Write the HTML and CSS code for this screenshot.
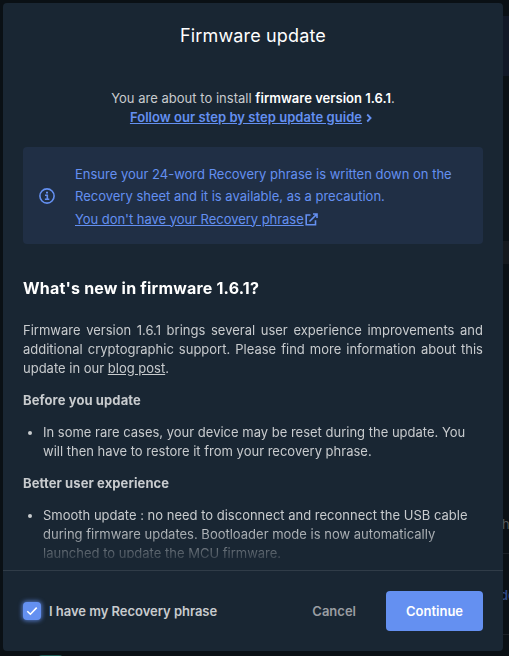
FILE: index.html
```
<!DOCTYPE html>
<html lang="en">
<head>
<meta charset="utf-8">
<title>Firmware update</title>
<link rel="stylesheet" href="styles.css">
</head>
<body>
<div class="backdrop">
  <i class="panel panel-top"></i>
  <i class="panel panel-mid"></i>
  <i class="rule rule-a"></i>
  <i class="rule rule-b"></i>
  <span class="peek peek-text">h</span>
  <span class="peek peek-link">de</span>
  <i class="pill"></i>
</div>
<main class="modal">
  <h1 class="title">Firmware update</h1>
  <section class="body">
    <p class="intro">You are about to install <strong>firmware version 1.6.1</strong>.</p>
    <p class="guide"><a class="guide-link">Follow our step by step update guide</a><svg class="chevron" viewBox="0 0 6 10"><path d="M1.2 1.5 4.6 5 1.2 8.5"/></svg></p>
    <div class="notice">
      <svg class="info" viewBox="0 0 16 16"><circle cx="8" cy="8" r="7.1"/><path d="M6 7.3H8.3V11.4M5.9 11.3H10.3M7 4.6H9" /></svg>
      <div class="notice-text">
        <p>Ensure your 24-word Recovery phrase is written down on the Recovery sheet and it is available, as a precaution.</p>
        <p class="notice-last"><a class="notice-link">You don't have your Recovery phrase</a><svg class="external" viewBox="0 0 13 13"><path d="M5.5 2H1.2V11.8H10.5V7.3M4.5 8.5 11.6 1.4M8 1H12V5"/></svg></p>
      </div>
    </div>
    <div class="notes">
      <h2>What's new in firmware 1.6.1?</h2>
      <p class="summary">Firmware version 1.6.1 brings several user experience improvements and additional cryptographic support. Please find more information about this update in our <a>blog post</a>.</p>
      <h3>Before you update</h3>
      <ul><li>In some rare cases, your device may be reset during the update. You will then have to restore it from your recovery phrase.</li></ul>
      <h3>Better user experience</h3>
      <ul><li>Smooth update : no need to disconnect and reconnect the USB cable during firmware updates. Bootloader mode is now automatically launched to update the MCU firmware.</li></ul>
    </div>
  </section>
  <footer class="footer">
    <span class="checkbox"><svg viewBox="0 0 12 10"><path d="M1.3 5.2 4.4 8.2 10.7 1.6"/></svg></span>
    <span class="check-label">I have my Recovery phrase</span>
    <button class="cancel">Cancel</button>
    <button class="continue">Continue</button>
  </footer>
</main>
</body>
</html>
```
FILE: styles.css
```
* { box-sizing: border-box; }
body {
  margin: 0;
  padding: 3px;
  width: 509px;
  height: 656px;
  overflow: hidden;
  position: relative;
  background: #0a1015;
  color: #c8cbce;
  font: 13px/19px Inter, sans-serif;
}
h1, h2, h3, p, ul { margin: 0; }
svg { display: block; flex: none; fill: none; stroke: currentColor; }

.backdrop { position: absolute; inset: 0; overflow: hidden; }
.backdrop > * { position: absolute; }
.panel { right: 0; width: 6px; background: #111827; }
.panel-top { top: 16px; height: 60px; }
.panel-mid { top: 241px; height: 23px; background: #15191e; }
.rule { right: 0; width: 6px; height: 1px; background: #1b2026; }
.rule-a { top: 553px; }
.rule-b { top: 634px; }
.peek { left: 502px; }
.peek-text { top: 515px; color: #54585c; }
.peek-link { top: 586px; left: 500px; color: #304884; font-weight: 600; }
.pill { left: 38px; top: 655px; width: 25px; height: 8px; border-radius: 4px; background: #1b5752; }

.modal {
  position: relative;
  width: 500px;
  height: 648px;
  display: flex;
  flex-direction: column;
  background: #192633;
  border-radius: 4px;
  overflow: hidden;
}
.title {
  padding-top: 21px;
  text-align: center;
  color: #fff;
  font-size: 18px;
  line-height: 24px;
  font-weight: 400;
  letter-spacing: .14px;
}
.body { flex: 1; min-height: 0; padding: 41px 20px 0; display: flex; flex-direction: column; }
.intro { text-align: center; letter-spacing: .02px; }
.intro strong { color: #fff; font-weight: 600; }
.guide { display: flex; justify-content: center; align-items: center; color: #6490f1; font-weight: 600; padding-right: 4px; }
.guide-link { letter-spacing: .04px; }
.guide-link, .notice-link, .summary a { text-decoration: underline; }
.chevron { width: 6px; height: 10px; margin-left: 4px; stroke-width: 1.8; }
.notice {
  flex: none;
  display: flex;
  align-items: center;
  height: 97px;
  margin-top: 20px;
  padding: 0 16px;
  border-radius: 4px;
  background: #202f45;
  color: #6490f1;
  line-height: 22px;
}
.notice-text { flex: 1; padding-top: 2px; }
.info { width: 16px; height: 16px; margin-right: 20px; stroke-width: 1.6; }
.notice-last { display: flex; align-items: center; height: 24px; letter-spacing: -.04px; }
.external { width: 13px; height: 13px; margin: 2px 0 0 1px; stroke-width: 1.6; }
.notes {
  flex: 1;
  min-height: 0;
  margin-bottom: 12px;
  padding-top: 32px;
  overflow: hidden;
  -webkit-mask-image: linear-gradient(to top, transparent -9px, #000 31px);
  mask-image: linear-gradient(to top, transparent -9px, #000 31px);
}
h2 { color: #fff; font-size: 16px; line-height: 24px; font-weight: 700; letter-spacing: .2px; }
.summary { margin-top: 21px; text-align: justify; }
h3 { margin-top: 13px; font-size: 13px; line-height: 19px; font-weight: 700; letter-spacing: .1px; }
ul { margin-top: 13px; padding-left: 20px; }

.footer {
  flex: none;
  display: flex;
  align-items: center;
  height: 81px;
  padding: 0 20px;
  border-top: 1px solid #303c48;
  font-weight: 600;
}
.checkbox {
  display: grid;
  place-items: center;
  width: 18px;
  height: 18px;
  border-radius: 4px;
  background: #6490f1;
  color: #fff;
  box-shadow: 0 0 4px 1px rgba(100, 144, 241, .75);
}
.checkbox svg { width: 12px; height: 10px; stroke-width: 1.6; }
.check-label { margin: 0 auto 0 8px; letter-spacing: -.03px; }
button { height: 40px; padding: 0 20px; border: 0; border-radius: 4px; font: 600 13px/19px Inter, sans-serif; }
.cancel { margin-right: 10px; background: none; color: #999da2; }
.continue { background: #6490f1; color: #fff; width: 97px; }
```
